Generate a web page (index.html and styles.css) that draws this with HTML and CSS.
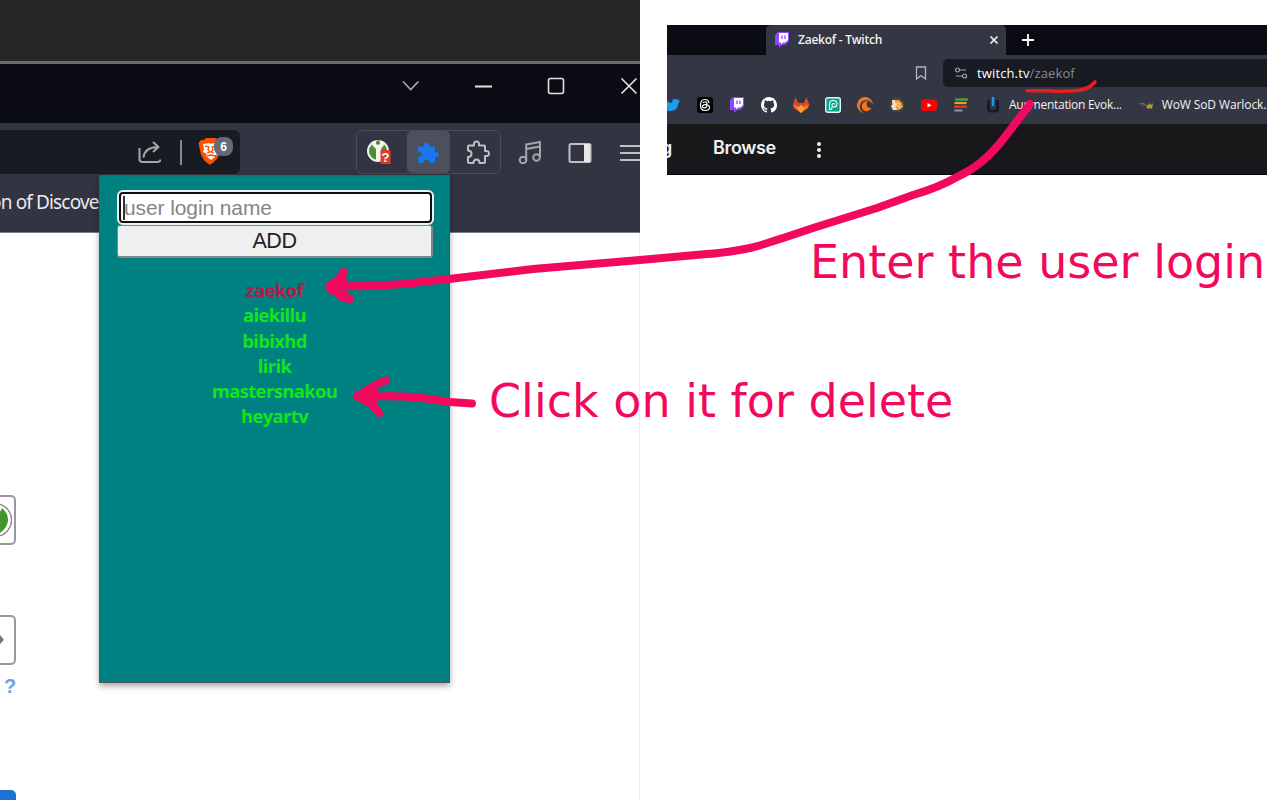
FILE: index.html
```html
<!DOCTYPE html>
<html lang="en">
<head>
<meta charset="utf-8">
<title>Extension guide</title>
<link rel="stylesheet" href="styles.css">
</head>
<body>
<main class="guide">
  <section class="left">
    <div class="desktop"></div>
    <header class="titlebar">
      <svg width="18" height="18" viewBox="0 0 18 18"><path d="M1 4.500l7.700 8 7.700-8" class="win-line dim"/></svg>
      <svg width="18" height="18" viewBox="0 0 18 18"><path d="M1 9.500h17" class="win-line heavy"/></svg>
      <svg width="18" height="18" viewBox="0 0 18 18"><rect x="1.500" y="1.500" width="15" height="15" rx="2" class="win-line"/></svg>
      <svg width="18" height="18" viewBox="0 0 18 18"><path d="M1.500 1.500l15 15M16.500 1.500l-15 15" class="win-line"/></svg>
    </header>
    <div class="toolbar">
      <div class="address">
        <svg width="24" height="24" viewBox="0 0 24 24"><path d="M2.500 8v11q0 3 3 3h15q3 0 3-2.500M6.500 17.500q1-10 14-10.500M16 2l5.500 5-5.500 5" class="tool-line"/></svg>
        <span class="divider"></span>
        <svg class="brave" width="38" height="32" viewBox="0 0 38 32"><path d="M8 2h10l2 2 3 1-1 11q-1 7-10 13-8-5-9.500-12L.5 7 3 4l3 0z" fill="#fb5002"/><path d="M5 8l6-1 2 1 3-1 6 1-2 6 1 4-4 1 0 2-4 3-5-4 1-2-4-2 1-3z" fill="#fff"/><path d="M7 10l4 1-1 3 2 2-3 1M18 10l-4 1 1 3-2 2 3 1M9 20l4-1 4 1" fill="none" stroke="#fb5002" stroke-width="1.300"/><rect x="16" y="1" width="19" height="19" rx="8" fill="#666977"/><text x="25.500" y="15" class="badge">6</text></svg>
      </div>
      <div class="extensions">
        <span class="ext"><svg width="26" height="26" viewBox="0 0 26 26"><circle cx="12" cy="12" r="11" fill="#eee"/><circle cx="12" cy="12" r="9" fill="#45952d"/><path d="M7 2h3v3l2 1 2-1V2h3l1 4-3 4v11h-5V10L6 6z" fill="#f5f5ee"/><circle cx="12" cy="3" r="1.700" fill="#45952d"/><rect x="14.500" y="11" width="10" height="14" rx="1" fill="#df3b2c"/><text x="19.500" y="22.500" class="question">?</text></svg></span>
        <span class="ext active"><svg width="24" height="24" viewBox="0 0 24 24"><path d="M3 5.500h5Q7.500 1.500 10.500 1.500T13 5.500h5q1 0 1 1V11q4-.5 4 2.500t-4 2.500V21q0 1-1 1h-4.500q0-3.500-3-3.500T7.500 22H3q-1 0-1-1v-5q3.500 0 3.500-2.700T2 10.500v-4q0-1 1-1z" fill="#1a75ef"/></svg></span>
        <span class="ext"><svg width="25" height="25" viewBox="0 0 25 25"><path d="M4 5.500h5Q8.500 1.500 11.500 1.500T14 5.500h5q1 0 1 1V11q4-.5 4 2.500t-4 2.500V22q0 1-1 1h-4.500q0-3.500-3-3.500T8.500 23H4q-1 0-1-1v-5q3.500 0 3.500-3.200T3 10.500v-4q0-1 1-1z" class="tool-line light"/></svg></span>
      </div>
      <svg class="music" width="24" height="24" viewBox="0 0 24 24"><circle cx="5" cy="20" r="3.300" class="tool-line"/><circle cx="18.500" cy="17.500" r="3.300" class="tool-line"/><path d="M8.200 20V4.500L22 2v15M8.200 9L22 6.500" class="tool-line"/></svg>
      <svg class="panel-icon" width="24" height="22" viewBox="0 0 24 22"><rect x="1.500" y="2" width="21" height="18" rx="1.500" class="tool-line light"/><path d="M16 2h6v18h-6z" fill="#e8e8e8"/></svg>
      <svg class="menu" width="20" height="20" viewBox="0 0 20 20"><path d="M0 3h20M0 10h20M0 17h20" class="tool-line light"/></svg>
    </div>
    <div class="favorites"><span class="discovery">on of Discove</span></div>
    <div class="page">
      <div class="thumb"><svg width="12" height="44" viewBox="0 0 12 44"><circle cx="-5" cy="22" r="16.500" fill="#fff" stroke="#888" stroke-width="1.500"/><path d="M-5 12L1 13 2 10Q8 15 8 22t-8 13z" fill="#43952f"/></svg></div>
      <div class="next"><svg width="6" height="12" viewBox="0 0 6 12"><path d="M-2 1l4 4.700-4 4.700" fill="none" stroke="#777783" stroke-width="3"/></svg></div>
      <span class="help">?</span>
      <div class="blue"></div>
    </div>
    <div class="popup">
      <div class="field"><span class="caret"></span><span class="placeholder">user login name</span></div>
      <div class="add"><span>ADD</span></div>
      <ul class="users">
        <li class="selected">zaekof</li>
        <li>aiekillu</li>
        <li>bibixhd</li>
        <li>lirik</li>
        <li>mastersnakou</li>
        <li>heyartv</li>
      </ul>
    </div>
  </section>
  <section class="right">
    <div class="browser">
      <div class="tabs">
        <div class="tab">
          <svg width="16" height="16" viewBox="0 0 16 16"><path d="M4 0h11v9l-4 4H8l-3 3v-3H1V3z" fill="#9146ff"/><path d="M5 1h9v7l-2.500 2.500H9L7 12.500v-2H5z" fill="#fff"/><path d="M8 3.500v3.500M11 3.500v3.500" stroke="#9146ff" stroke-width="1.300"/></svg>
          <span class="tab-title">Zaekof - Twitch</span>
          <svg width="10" height="10" viewBox="0 0 10 10"><path d="M1.500 1.500l7 7M8.500 1.500l-7 7" stroke="#f2f2f5" stroke-width="1.700"/></svg>
        </div>
        <svg class="plus" width="12" height="12" viewBox="0 0 12 12"><path d="M6 0v12M0 6h12" stroke="#fff" stroke-width="1.800"/></svg>
      </div>
      <div class="nav">
        <svg width="12" height="14" viewBox="0 0 12 14"><path d="M1.500 1h9v12L6 9.500 1.500 13z" fill="none" stroke="#b6b7be" stroke-width="1.300"/></svg>
        <div class="url">
          <svg width="14" height="14" viewBox="0 0 14 14" fill="none" stroke="#a2a4aa" stroke-width="1.200"><circle cx="3.500" cy="4" r="2"/><circle cx="10.500" cy="10" r="2"/><path d="M6 4h6M2 10h6"/></svg>
          <span class="host">twitch.tv<i>/zaekof</i></span>
        </div>
      </div>
      <div class="marks">
        <svg width="16" height="16" viewBox="0 0 16 16"><path d="M1 2.500q3 3.500 7 3.500 0-4 3-4 1.500 0 2.500 1l2-.700-1 2 1.500-.300-1.500 1.800Q14 14 6 14 3 14 0 12.500q3 0 4.500-1.200Q2 11 1.500 9h1.300Q.5 8 .5 5.700l1.400.4Q0 4.500 1 2.500z" fill="#1d9bf0" transform="translate(-1 0)"/></svg>
        <svg width="16" height="16" viewBox="0 0 16 16"><rect width="16" height="16" rx="3" fill="#000"/><path d="M12 6Q11.500 2.500 8 2.500 3.500 2.500 3.500 8T8 13.500q4.500 0 4.500-3T7.800 7.700q-2.300.3-2.300 1.800t2.200 1.400Q10 10.800 10 7.700T8 5q-1.500 0-2.200 1" fill="none" stroke="#fff" stroke-width="1.200"/></svg>
        <svg width="16" height="16" viewBox="0 0 16 16"><path d="M4 0h11v9l-4 4H8l-3 3v-3H1V3z" fill="#9146ff"/><path d="M5 1h9v7l-2.500 2.500H9L7 12.500v-2H5z" fill="#fff"/><path d="M8 3.500v3.500M11 3.500v3.500" stroke="#9146ff" stroke-width="1.300"/></svg>
        <svg width="16" height="16" viewBox="0 0 16 16"><path d="M8 0C3.580 0 0 3.580 0 8c0 3.540 2.290 6.530 5.470 7.590.4.070.55-.17.55-.38v-1.500c-2.220.48-2.690-.94-2.690-.94-.36-.92-.89-1.170-.89-1.170-.72-.5.060-.49.060-.49.8.06 1.230.83 1.230.83.71 1.220 1.870.87 2.330.66.070-.52.28-.87.5-1.070C4.780 11.330 2.920 10.640 2.920 7.580c0-.87.31-1.590.82-2.150-.08-.2-.36-1.020.08-2.120 0 0 .67-.21 2.200.82a7.600 7.600 0 0 1 4 0c1.530-1.040 2.200-.82 2.200-.82.44 1.100.16 1.920.08 2.120.51.560.82 1.270.82 2.150 0 3.070-1.870 3.750-3.650 3.950.29.250.54.730.54 1.480v2.200c0 .21.15.46.55.38A8 8 0 0 0 16 8c0-4.420-3.580-8-8-8z" fill="#fff"/></svg>
        <svg width="16" height="16" viewBox="0 0 16 16"><path d="M0 8L2.500.5 5 6h6L13.500.5 16 8l-1 3-7 5-7-5z" fill="#fc6d26"/><path d="M2.500.5L5 6h6L13.500.5 16 8l-3 .2L8 12 3 8.200 0 8z" fill="#e24329"/><path d="M4 11l4-3 4 3-4 5z" fill="#fca326"/></svg>
        <svg width="16" height="16" viewBox="0 0 16 16"><rect x=".7" y=".7" width="14.600" height="14.600" rx="2" fill="#08a58c" stroke="#e9f5f2" stroke-width="1.400"/><path d="M4.500 13V7.500Q4.500 3.500 8.300 3.500 12 3.500 12 6.800T8.800 10Q7 10 7 8.200t1.700-1.700q1.200 0 .8 1.200M4.500 12.500q2.500.5 2.500-2.500" fill="none" stroke="#fff" stroke-width="1.100"/></svg>
        <svg width="16" height="16" viewBox="0 0 16 16"><path d="M15.900 9A8 8 0 1 0 8 16 6.500 6.500 0 1 1 15 6.500Q16 8 15.900 9z" fill="#f47521"/><path d="M11.500 4.600A5 5 0 1 0 14.500 10.500 3.200 3.200 0 1 1 11.500 4.600z" fill="#f47521"/></svg>
        <svg width="16" height="16" viewBox="0 0 16 16"><circle cx="8" cy="8" r="7.500" fill="#464646"/><path d="M3 3h7l3 3 1 4-4 3H4l1-3-2-3z" fill="#f59a32"/><path d="M3 3h3v3h2v3H6l2 4H4L2 9l2-2z" fill="#eee1cf"/><path d="M8 5l3 2-2 2 3 2" fill="none" stroke="#d6e1e2"/></svg>
        <svg width="16" height="16" viewBox="0 0 16 16"><rect y="2.500" width="16" height="11.500" rx="3" fill="#f00"/><path d="M6.500 6v4.500l4-2.200z" fill="#fff"/></svg>
        <svg width="16" height="16" viewBox="0 0 16 16"><path d="M2 2.500h13" stroke="#45a348" stroke-width="2.300"/><path d="M1.500 6h12" stroke="#f39a18" stroke-width="2.300"/><path d="M1 9.700h13" stroke="#d83c35" stroke-width="2.300"/><path d="M1.500 13.500h8" stroke="#999" stroke-width="2"/></svg>
        <svg width="16" height="16" viewBox="0 0 16 16"><path d="M3.500 3v9q0 2 2 2h5q2 0 2-2V3" fill="none" stroke="#171a31" stroke-width="3"/><path d="M8 0v9" stroke="#0ca0ff" stroke-width="2.400"/></svg>
        <span class="evok">Augmentation Evok...</span>
        <svg width="16" height="16" viewBox="0 0 16 16"><path d="M1 6l2 1 2-1 3 3 2-1 1 3M3 7l3 2" fill="none" stroke="#77705c"/><path d="M8 8l2 1 1-3 2 2 2-2-1 6-2-1-2 1-1-1z" fill="#b39a35"/></svg>
        <span class="warlock">WoW SoD Warlock...</span>
      </div>
      <div class="site"><span class="following">g</span><span class="browse">Browse</span><svg width="6" height="18" viewBox="0 0 6 18" fill="#eee"><circle cx="3" cy="3" r="2"/><circle cx="3" cy="9" r="2"/><circle cx="3" cy="15" r="2"/></svg></div>
    </div>
  </section>
  <svg class="drawing" width="1280" height="800" viewBox="0 0 1280 800">
    <path class="underline" d="M1027 90.700H1048Q1065 92 1078 90.500 1089 89 1095 82"/>
    <path d="M1030 104L1008 133Q993 153 980 163 970 171 957 177 940 187 913 195L877 208 813 228Q763 245 750 248 726 253 707 254L640 260 533 269 453 278.500 403 284Q370 286.500 331 286.500M344 272Q340 279 329.500 286L330 289Q338 292 342 297 346 299 350 299M332 287L343 281M334 288L345 295"/>
    <path d="M472 403.500L450 402 423 398Q405 395.500 357 396M386 380.500Q375 384 357 396.500 373 403 379 413M360 395L374 390M361 397L374 402"/>
  </svg>
  <p class="note enter">Enter the user login</p>
  <p class="note click">Click on it for delete</p>
</main>
</body>
</html>
```
FILE: styles.css
```css
* { box-sizing: border-box; }
body { margin: 0; background: #fff; }
svg { display: block; flex: none; }
span { white-space: nowrap; }
.guide { position: relative; display: flex; width: 1280px; height: 800px; overflow: hidden; }
.left { position: relative; width: 640px; height: 800px; overflow: hidden; flex: none; }
.desktop { height: 64px; background: #262626; border-bottom: 3px solid #6e6d6c; }
.titlebar { height: 59px; background: #0b0b14; display: flex; justify-content: flex-end; gap: 55px; padding: 13px 2px 0 0; }
.win-line { fill: none; stroke: #e3e3e5; stroke-width: 1.6; }
.win-line.dim { stroke: #aaaab0; transform: translateX(1px); }
.win-line.heavy { stroke-width: 2; }
.toolbar { height: 51px; background: #323442; display: flex; padding-top: 7px; }
.tool-line { fill: none; stroke: #a5a6ab; stroke-width: 2; stroke-linejoin: round; }
.tool-line.light { stroke: #bebfc4; }
.address { width: 240px; height: 44px; background: #181b22; border-radius: 0 6px 6px 0; display: flex; align-items: center; padding-left: 137px; }
.divider { width: 2px; height: 25px; margin-left: 19px; background: #88898e; }
.brave { margin: -1px 0 0 16px; }
.badge { font: bold 12px "Liberation Sans", sans-serif; fill: #fff; text-anchor: middle; }
.question { font: bold 13px "Liberation Sans", sans-serif; fill: #fff; text-anchor: middle; }
.extensions { width: 145px; height: 44px; margin-left: 116px; border: 1px solid #484b58; border-radius: 6px; display: flex; }
.ext { width: 50px; display: flex; align-items: center; justify-content: center; padding-right: 6px; }
.ext.active { width: 44px; padding: 1px 2px 0 0; background: #4c4f5c; border-radius: 5px; }
.ext:last-child { padding: 0 0 0 5px; }
.music { margin: 10px 0 0 17px; }
.panel-icon { margin: 12px 0 0 26px; }
.menu { margin: 13px 0 0 28px; }
.favorites { height: 59px; background: #323442; border-bottom: 1px solid #777983; padding-top: 14px; }
.discovery { font: 19px/28px "Noto Sans", sans-serif; color: #e9e9ef; margin-left: -10px; letter-spacing: -.85px; }
.page { height: 567px; border-right: 1px solid #eee; padding-top: 262px; }
.thumb, .next { width: 16px; height: 50px; border: 2px solid #99979f; border-left: 0; border-radius: 0 5px 5px 0; }
.thumb svg { margin-top: 1px; }
.next { margin-top: 70px; padding-top: 17px; }
.help { display: block; height: 42px; padding-left: 4px; font: bold 20px/42px "Liberation Sans", sans-serif; color: #68a5de; }
.blue { width: 16px; height: 40px; margin-top: 83px; background: #1c72ce; border-radius: 0 5px 0 0; }
.popup { position: absolute; left: 99px; top: 175px; width: 351px; height: 508px; background: #008181; border: 1px solid #4f5857; box-shadow: 0 3px 6px rgba(0,0,0,.35); padding: 15px 16px; }
.field { height: 33px; width: 315px; margin-left: 2px; border: 3px solid #101010; border-radius: 5px; outline: 2px solid #e9f4f3; outline-offset: -1px; background: #fff; display: flex; align-items: center; padding-left: 2px; }
.caret { width: 1.5px; height: 24px; background: #333; }
.placeholder { font: 21px/24px "Liberation Sans", sans-serif; color: #858585; letter-spacing: -.1px; margin-left: -.5px; }
.add { width: 316px; height: 33px; margin: 1px 0 0 1px; border: 2px solid #858585; border-width: 1px 2px 2px 1px; border-radius: 3px; background: #efefef; text-align: center; font: 21.5px/31px "Liberation Sans", sans-serif; letter-spacing: -.4px; color: #222; }
.users { list-style: none; padding: 0; margin: 19px 0 0; text-align: center; font: bold 18.5px/25.3px "Open Sans", sans-serif; letter-spacing: -.65px; color: #13e51b; }
.users .selected { color: #b71948; }
.right { width: 640px; padding: 25px 13px 0 27px; }
.browser { width: 600px; height: 150px; overflow: hidden; background: #333643; border-bottom: 1px solid #060612; color: #f2f2f5; }
.tabs { height: 30px; background: #0b0b14; display: flex; align-items: center; }
.tab { width: 240px; height: 30px; margin-left: 99px; background: #333643; border-radius: 5px 5px 0 0; display: flex; align-items: center; padding: 0 7px 0 8px; }
.tab-title { flex: 1; margin-left: 8px; font: 600 12px/18px "Open Sans", sans-serif; letter-spacing: -.24px; }
.plus { margin-left: 16px; }
.nav { height: 34px; display: flex; align-items: center; padding: 2px 0 0 248px; }
.url { width: 340px; height: 28px; margin-left: 16px; background: #181b22; border-radius: 5px 0 0 5px; display: flex; align-items: center; padding-left: 11px; }
.host { margin-left: 9px; font: 13px/20px "Open Sans", sans-serif; letter-spacing: .13px; color: #fff; }
.host i { font-style: normal; color: #888a8f; }
.marks { height: 35px; display: flex; align-items: center; gap: 16px; padding: 0 0 3px; margin-left: -2px; }
.evok, .warlock { font: 12px/18px "Open Sans", sans-serif; letter-spacing: -.28px; }
.evok { width: 113px; margin-left: -8px; }
.warlock { margin-left: -8px; letter-spacing: -.1px; }
.site { height: 51px; background: #18181a; display: flex; align-items: center; padding-bottom: 3px; font: 600 18px/24px Inter, sans-serif; color: #efeff1; }
.following { width: 12px; margin-left: -6px; }
.browse { width: 64px; margin-left: 40px; letter-spacing: -.35px; }
.site svg { margin: 3px 0 0 39px; }
.drawing { position: absolute; left: 0; top: 0; fill: none; stroke: #f2085c; stroke-width: 8; stroke-linecap: round; stroke-linejoin: round; }
.underline { stroke: #e91d1d; stroke-width: 3.6; }
.note { position: absolute; margin: 0; white-space: nowrap; font: 46px/54px "DejaVu Sans", sans-serif; color: #f2085c; }
.enter { left: 810px; top: 235px; }
.click { left: 489px; top: 374px; }
```
